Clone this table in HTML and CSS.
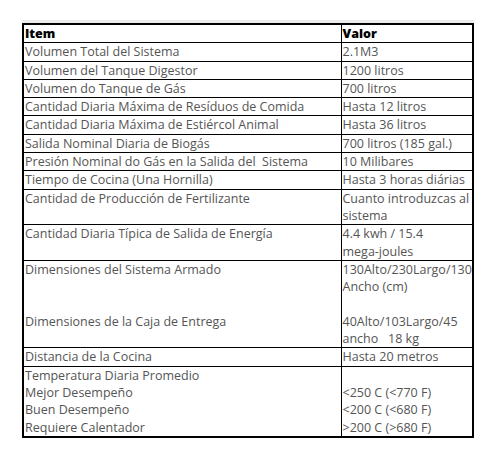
FILE: index.html
```html
<!DOCTYPE html>
<html lang="es">
<head>
<meta charset="utf-8">
<link rel="stylesheet" href="styles.css">
</head>
<body>
<div class="page">
  <div class="shade"></div>
  <table class="spec">
    <colgroup><col class="c1"><col class="c2"></colgroup>
    <tr class="head"><td>Item</td><td>Valor</td></tr>
    <tr><td>Volumen Total del Sistema</td><td>2.1M3</td></tr>
    <tr><td>Volumen del Tanque Digestor</td><td>1200 litros</td></tr>
    <tr><td>Volumen do Tanque de Gás</td><td>700 litros</td></tr>
    <tr><td>Cantidad Diaria Máxima de Resíduos de Comida</td><td>Hasta 12 litros</td></tr>
    <tr><td>Cantidad Diaria Máxima de Estiércol Animal</td><td>Hasta 36 litros</td></tr>
    <tr><td>Salida Nominal Diaria de Biogás</td><td>700 litros (185 gal.)</td></tr>
    <tr><td>Presión Nominal do Gás en la Salida del&nbsp; Sistema</td><td>10 Milibares</td></tr>
    <tr><td>Tiempo de Cocina (Una Hornilla)</td><td>Hasta 3 horas diárias</td></tr>
    <tr><td>Cantidad de Producción de Fertilizante</td><td>Cuanto introduzcas al<br>sistema</td></tr>
    <tr><td>Cantidad Diaria Típica de Salida de Energía</td><td>4.4 kwh / 15.4<br>mega-joules</td></tr>
    <tr><td>Dimensiones del Sistema Armado<br>&nbsp;<br>&nbsp;<br>Dimensiones de la Caja de Entrega<br>&nbsp;</td><td>130Alto/230Largo/130<br>Ancho (cm)<br>&nbsp;<br>40Alto/103Largo/45<br>ancho&nbsp;&nbsp; 18 kg</td></tr>
    <tr><td>Distancia de la Cocina</td><td>Hasta 20 metros</td></tr>
    <tr><td>Temperatura Diaria Promedio<br>Mejor Desempeño<br>Buen Desempeño<br>Requiere Calentador</td><td>&nbsp;<br>&lt;250 C (&lt;770 F)<br>&lt;200 C (&lt;680 F)<br>&gt;200 C (&gt;680 F)</td></tr>
  </table>
</div>
</body>
</html>
```

FILE: styles.css
```css
html, body {
  margin: 0;
  padding: 0;
  background: #ffffff;
}
.page {
  padding: 20px 0 0 22px;
  width: 452px;
}
.shade {
  height: 3px;
  background: #ececec;
  margin-bottom: 0;
}
.spec {
  border-collapse: collapse;
  border: 2px solid #000;
  width: 452px;
  font-family: "Open Sans", "Liberation Sans", sans-serif;
  font-size: 12.5px;
  line-height: 17.3px;
  color: #555555;
}
.spec col.c1 { width: 320px; }
.spec col.c2 { width: 132px; }
.spec td {
  border: 1px solid #000;
  padding: 0 0 0 1px;
  vertical-align: top;
  white-space: nowrap;
}
.spec tr.head td {
  font-weight: 800;
  color: #000;
}
```
